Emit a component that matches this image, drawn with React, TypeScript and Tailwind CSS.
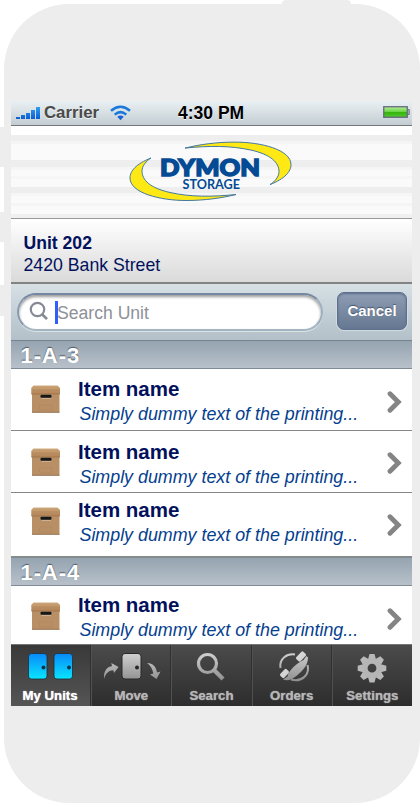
import type { ReactNode } from "react";

const swoosh =
  "M151 158 C136 164 130 171 130 178 C130 193 160 200.500 186 200.500 C205 200.500 222 198 236 194.500 C212 197 190 197 170 192.500 C150 188 142 180 142 171 C142 166 146 161 151 158 Z";

function Logo() {
  return (
    <svg width="166" height="66" viewBox="127 138 166 66" className="block">
      <g fill="#ffe914" stroke="#4478a0" strokeWidth="1">
        <path d={swoosh} />
        <path d={swoosh} transform="rotate(180 210.500 171.300)" />
      </g>
      <text x="160" y="175.500" textLength="100" lengthAdjust="spacingAndGlyphs" fill="#044a94" stroke="#044a94" strokeWidth="1.500" className="font-['Lato'] text-[23.500px] font-black">DYMON</text>
      <text x="182.500" y="189" textLength="57.500" lengthAdjust="spacingAndGlyphs" fill="#044a94" className="font-['Lato'] text-[13.500px] font-bold">STORAGE</text>
    </svg>
  );
}

function StatusBar() {
  return (
    <div className="flex h-[25px] shrink-0 items-center border-b border-[#74787c] bg-linear-to-b from-[#e9f0f4] to-[#c4ced2]">
      <svg width="25" height="14" viewBox="0 0 25 14" className="ml-[5px] shrink-0">
        <defs>
          <linearGradient id="signal" x1="0" y1="0" x2="0" y2="14" gradientUnits="userSpaceOnUse">
            <stop offset="0" stopColor="#35a4f2" />
            <stop offset="1" stopColor="#0857d2" />
          </linearGradient>
        </defs>
        <g fill="url(#signal)">
          <rect x="0" y="11" width="4" height="2" />
          <rect x="5" y="9" width="4" height="4" />
          <rect x="10" y="7" width="4" height="6" />
          <rect x="15" y="4" width="4" height="9" />
          <rect x="20" y="1" width="4" height="12" />
        </g>
      </svg>
      <span className="ml-[3px] w-[56px] text-[16.800px] leading-[24px] font-bold text-[#4a4a4a] [text-shadow:0_1px_0_#ffffffaa]">Carrier</span>
      <svg width="21" height="16" viewBox="0 0 21 16" className="ml-[10px] shrink-0" fill="none" stroke="#1a78dc" strokeWidth="2.500">
        <path d="M1 5.800 Q10.500 -2.300 20 5.800" />
        <path d="M4.700 9.600 Q10.500 4.600 16.300 9.600" />
        <path d="M7.300 11.800 Q10.500 9.200 13.700 11.800 L10.500 15.200 Z" fill="#1a60d8" stroke="none" />
      </svg>
      <span className="ml-[47px] w-[70px] text-[17.500px] leading-[24px] font-bold whitespace-nowrap text-black [text-shadow:0_1px_0_#ffffffaa]">4:30 PM</span>
      <svg width="27" height="14" viewBox="0 0 27 14" className="mr-[2px] mb-[2px] ml-auto shrink-0">
        <defs>
          <linearGradient id="charge" x1="0" y1="0" x2="0" y2="1">
            <stop offset="0" stopColor="#b5ee9a" />
            <stop offset="0.450" stopColor="#6ed848" />
            <stop offset="0.550" stopColor="#34b50c" />
            <stop offset="1" stopColor="#52c92e" />
          </linearGradient>
        </defs>
        <rect x="0.750" y="1.750" width="23.500" height="10.500" fill="url(#charge)" stroke="#66687e" strokeWidth="1.300" />
        <path d="M25 4.500 h1.300 v5 h-1.300" fill="#a8adba" stroke="#66687e" strokeWidth="0.800" />
      </svg>
    </div>
  );
}

function Box() {
  return (
    <svg width="29" height="28" viewBox="0 0 29 28" className="block">
      <defs>
        <linearGradient id="lid" x1="0" y1="0" x2="0" y2="1">
          <stop offset="0" stopColor="#d2ad80" />
          <stop offset="0.300" stopColor="#bd9164" />
          <stop offset="1" stopColor="#b48659" />
        </linearGradient>
      </defs>
      <rect x="1" y="8" width="27.500" height="19.500" fill="#b98f66" />
      <path d="M1 27.300 H28.500" stroke="#8a6848" strokeWidth="0.800" />
      <path d="M2.500 0.500 H26.500 L29 3 V9 H0.300 V3 Z" fill="url(#lid)" />
      <path d="M0.300 3.200 H29" stroke="#d2b083" strokeWidth="0.600" />
      <path d="M0.300 9 H29" stroke="#9c7349" strokeWidth="0.800" />
      <rect x="9.500" y="9.800" width="11" height="3" rx="1" fill="#151719" />
      <path d="M10.500 13.500 H20" stroke="#d6bfa0" strokeWidth="0.700" />
      <rect x="8.800" y="20" width="12" height="5" fill="none" stroke="#ac835b" strokeWidth="0.500" />
    </svg>
  );
}

function SectionHeader({ children }: { children: ReactNode }) {
  return (
    <div className="h-[28px] shrink-0 border-b border-[#7f8b95] bg-linear-to-b from-[#95a4b1] to-[#b8c1ca] pl-[9.500px] text-[22px] leading-[29px] font-bold tracking-[0.900px] text-white [text-shadow:0_-1px_1px_#4f5964]">
      {children}
    </div>
  );
}

function ItemRow({ row, text, icon, chevron }: { row: string; text: string; icon: string; chevron: string }) {
  return (
    <div className={`flex shrink-0 items-start bg-white pl-[20px] ${row}`}>
      <div className={icon}><Box /></div>
      <div className={`ml-[18px] whitespace-nowrap ${text}`}>
        <div className="text-[20.500px] leading-[24px] font-bold text-[#02115c]">Item name</div>
        <div className="pl-[1.500px] text-[17.850px] leading-[26px] text-[#04408e] italic">Simply dummy text of the printing...</div>
      </div>
      <svg width="15" height="22" viewBox="0 0 15 22" className={`mr-[10px] ml-auto ${chevron}`} fill="none" stroke="#848484" strokeWidth="4.800" strokeLinecap="round">
        <path d="M3 2.800 L11.300 11 L3 19.200" />
      </svg>
    </div>
  );
}

const rows = {
  first: { row: "h-[62px] border-b border-[#868686]", text: "mt-[8px]", icon: "mt-[16px]", chevron: "mt-[22px]" },
  second: { row: "h-[62px] border-b border-[#868686]", text: "mt-[9px]", icon: "mt-[17px]", chevron: "mt-[21px]" },
  third: { row: "h-[65px] border-b-2 border-[#858b8c]", text: "mt-[5px]", icon: "mt-[14px]", chevron: "mt-[21px]" },
  fourth: { row: "h-[58px]", text: "mt-[7px]", icon: "mt-[16px]", chevron: "mt-[22px]" },
};

function Metal() {
  return (
    <defs>
      <linearGradient id="metal" x1="0" y1="0" x2="0" y2="32" gradientUnits="userSpaceOnUse">
        <stop offset="0" stopColor="#d6d6d6" />
        <stop offset="1" stopColor="#8a8a8a" />
      </linearGradient>
      <linearGradient id="cyan" x1="0" y1="0" x2="0" y2="1">
        <stop offset="0" stopColor="#0889f8" />
        <stop offset="1" stopColor="#09e6ff" />
      </linearGradient>
    </defs>
  );
}

function UnitsIcon() {
  return (
    <svg width="50" height="32" viewBox="0 0 50 32">
      <Metal />
      <g fill="url(#cyan)" stroke="#222c33" strokeWidth="0.800">
        <rect x="3.500" y="2.500" width="18.500" height="25.500" rx="3" />
        <rect x="29" y="2.500" width="18.500" height="25.500" rx="3" />
      </g>
      <circle cx="18.500" cy="16.500" r="2" fill="#12344a" />
      <circle cx="44" cy="16.500" r="2" fill="#12344a" />
    </svg>
  );
}

function MoveIcon() {
  return (
    <svg width="60" height="32" viewBox="0 0 60 32" fill="url(#metal)">
      <rect x="21" y="2.500" width="19" height="25.500" rx="3" stroke="#292929" />
      <circle cx="36" cy="16.500" r="2" fill="#272727" />
      <path d="M3 28 C2.500 20 6 15.500 11 15.300 L10.300 12 L17.500 16 L13 22 L12.300 19.300 C8 19.500 5 22 3 28 Z" />
      <path d="M46 12 C52 12 55.300 16 56 21.500 L59.500 20.500 L55.500 28 L49 23.500 L52.300 22.600 C51.500 18 49.500 14.500 46 12 Z" />
    </svg>
  );
}

function SearchTabIcon() {
  return (
    <svg width="36" height="32" viewBox="0 0 36 32" fill="none" stroke="url(#metal)">
      <circle cx="14.500" cy="12.500" r="9" strokeWidth="3.200" />
      <path d="M21 19 L30 28" strokeWidth="4.200" />
    </svg>
  );
}

function OrdersIcon() {
  return (
    <svg width="32" height="32" viewBox="2 0 32 32" className="mr-[-4px]">
      <g fill="none" stroke="url(#metal)" strokeWidth="2">
        <path d="M4.500 17 C3 8 11 2 19 3.500" />
        <path d="M31.500 14 C34 24 25.500 31.500 15 28.500" />
      </g>
      <g fill="url(#metal)">
        <path d="M27.500 9 C20 13 13 19 11.500 25.500 L7 28.500 C12 30.500 16 28.500 21 24.500 C27 19.500 32 14 32 6.500 L30.500 5 Z" />
        <rect x="-5" y="-3" width="10" height="6" rx="1.500" transform="translate(25 5.500) rotate(-47)" />
        <rect x="-4.500" y="-2.800" width="9" height="5.600" rx="1.500" transform="translate(8.500 22.500) rotate(-47)" />
      </g>
    </svg>
  );
}

function SettingsIcon() {
  const teeth = [0, 45, 90, 135, 180, 225, 270, 315];
  return (
    <svg width="34" height="32" viewBox="0 0 34 32">
      <g transform="translate(17 17.200)">
        <g fill="#b8b8b8">
          {teeth.map((angle) => (
            <path key={angle} d="M-4.200 -8 L-2.500 -14.300 H2.500 L4.200 -8 Z" transform={`rotate(${angle})`} />
          ))}
        </g>
        <circle r="7.200" fill="none" stroke="#b5b5b5" strokeWidth="5.600" />
      </g>
    </svg>
  );
}

function Tab({ label, icon, active = false }: { label: string; icon: ReactNode; active?: boolean }) {
  return (
    <div className={`flex w-1/5 flex-col items-center border-r border-[#303030] pt-[6px] last:border-r-0 ${active ? "bg-linear-to-b from-[#393939] to-[#555555] pr-px text-white" : "border-l border-l-[#515151] bg-linear-to-b from-[#4b4b4b] to-[#2d2d2d] text-[#b6b6b6]"}`}>
      <div className="h-[32px]">{icon}</div>
      <div className="mt-[4px] text-[13.200px] leading-[18px] font-bold whitespace-nowrap [text-shadow:0_0_1px_currentColor]">{label}</div>
    </div>
  );
}

export default function App() {
  return (
    <div className="relative h-[803px] w-[420px] overflow-hidden bg-white pt-[4px] pl-[4px] font-['Liberation_Sans',sans-serif]">
      <div className="absolute top-0 left-[282px] h-[8px] w-[69px] rounded-t-sm bg-[#ededed]" />
      <div className="absolute top-[127px] left-0 h-[40px] w-[4px] bg-[#ededed]" />
      <div className="absolute top-[212px] left-0 h-[30px] w-[4px] bg-[#ededed]" />
      <div className="absolute top-[285px] left-0 h-[31px] w-[4px] bg-[#ededed]" />
      <div className="h-[798.500px] w-[416px] rounded-[65px] bg-[#ededed] pt-[97px] pl-[7px]">
        <div className="flex h-[605px] w-[401px] flex-col overflow-hidden">
          <StatusBar />
          <div className="flex h-[93px] shrink-0 border-b border-[#999999] bg-[linear-gradient(#fff_0_9px,#eeeeee_9px_15px,#f5f5f5_15px_18px,#fafafa_18px_34px,#eeeeee_34px_41px,#f5f5f5_41px_44px,#fafafa_44px_50px,#f6f6f6_50px_53px,#fafafa_53px_61px,#eeeeee_61px_67px,#f6f6f6_67px_70px,#fafafa_70px_77px,#f5f5f5_77px_80px,#fafafa_80px_88px,#f0f0f0_88px_92px)] pt-[12px] pl-[116px]">
            <Logo />
          </div>
          <div className="h-[65px] shrink-0 border-b-2 border-[#838383] bg-linear-to-b from-white to-[#dadada] pt-[14px] pl-[12.500px] text-[#02115c]">
            <div className="text-[17.600px] leading-[21px] font-bold">Unit 202</div>
            <div className="text-[17.700px] leading-[22px]">2420 Bank Street</div>
          </div>
          <div className="flex h-[57px] shrink-0 items-start border-b border-[#77838e] bg-linear-to-b from-[#d6e0e5] to-[#b3c0c9] pt-[9px] pl-[6px]">
            <div className="flex h-[38px] w-[306px] items-center rounded-full border-2 border-t-[#7588a2] border-r-[#9daebd] border-b-[#a4b4c0] border-l-[#8799ae] bg-white pl-[10px] shadow-[inset_0_2px_3px_#9a9a9a,0_1px_0_#dce3e7]">
              <svg width="20" height="20" viewBox="0 0 20 20" fill="none" stroke="#858a94" strokeWidth="2.200" className="-mt-[2px]">
                <circle cx="8.500" cy="8.500" r="6.700" />
                <path d="M13.300 13.500 L18 18.200" strokeWidth="2.600" />
              </svg>
              <span className="ml-[6px] h-[23px] w-[3px] bg-[#315dff]" />
              <span className="-ml-px pt-px text-[17.600px] leading-[24px] text-[#8d9198]">Search Unit</span>
            </div>
            <button className="-mt-px ml-[14px] h-[38px] w-[70px] rounded-[7px] border border-[#5e708c] bg-linear-to-b from-[#8e9db3] to-[#667892] text-[15px] font-bold text-white shadow-[0_0_0_1px_#cfdae1,inset_0_1px_2px_#596c89] [text-shadow:0_-1px_1px_#43536c]">Cancel</button>
          </div>
          <SectionHeader>1-A-3</SectionHeader>
          <ItemRow {...rows.first} />
          <ItemRow {...rows.second} />
          <ItemRow {...rows.third} />
          <SectionHeader>1-A-4</SectionHeader>
          <ItemRow {...rows.fourth} />
          <div className="flex min-h-0 flex-1 border-t border-[#767676]">
            <Tab active label="My Units" icon={<UnitsIcon />} />
            <Tab label="Move" icon={<MoveIcon />} />
            <Tab label="Search" icon={<SearchTabIcon />} />
            <Tab label="Orders" icon={<OrdersIcon />} />
            <Tab label="Settings" icon={<SettingsIcon />} />
          </div>
        </div>
      </div>
    </div>
  );
}
